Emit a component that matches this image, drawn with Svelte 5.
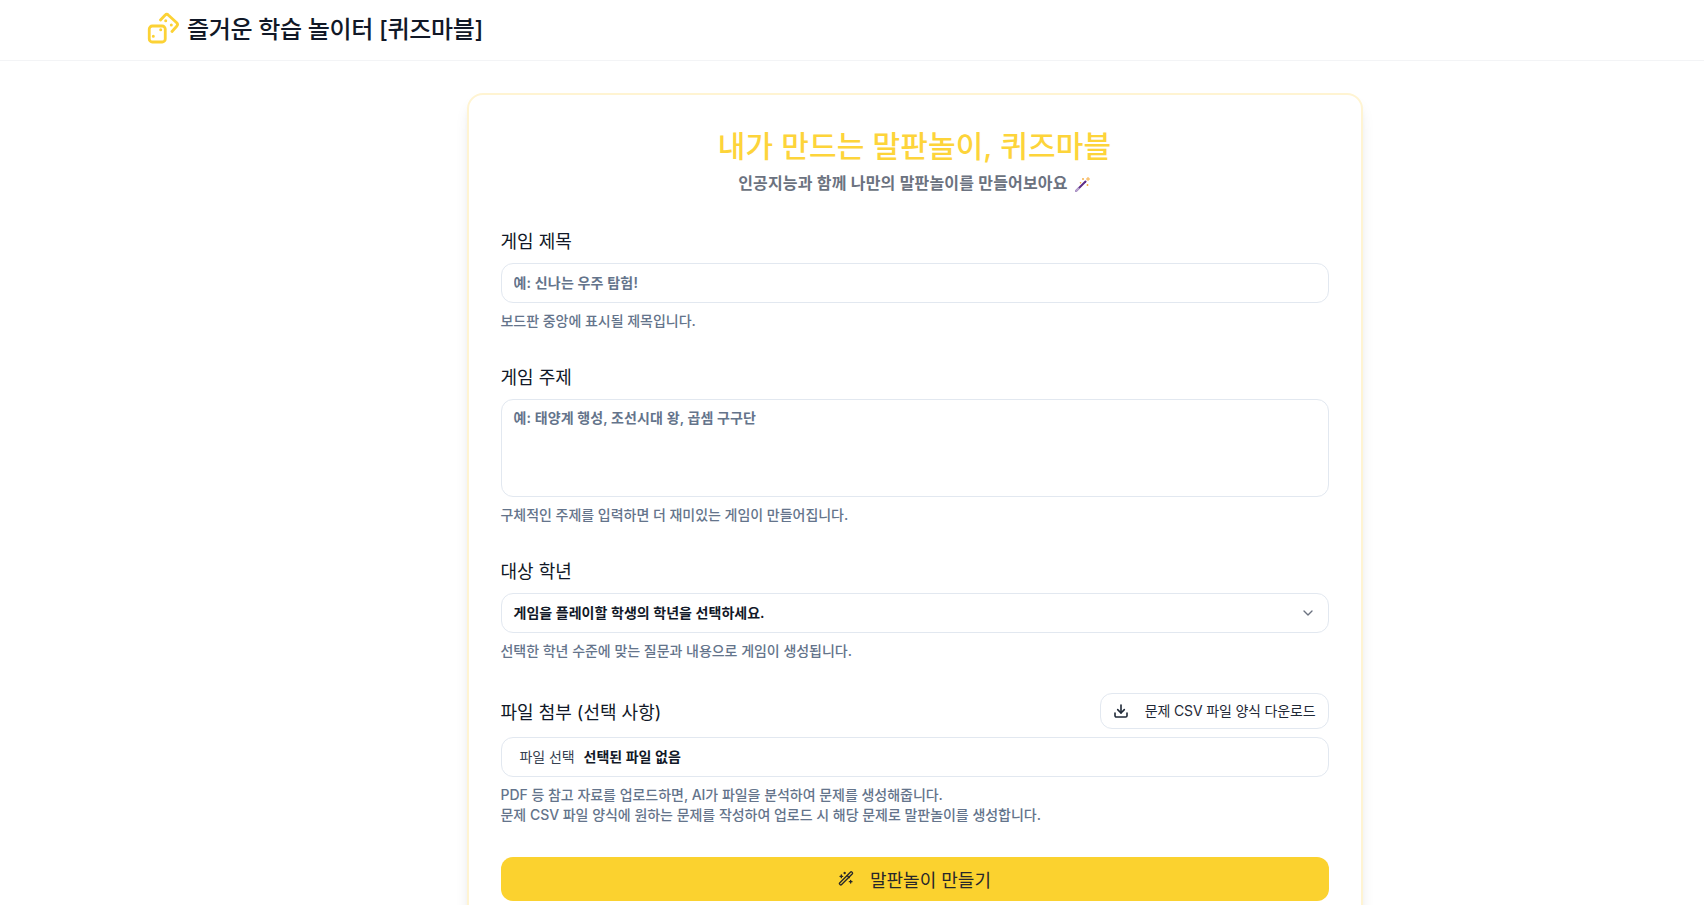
<script>
    const hints = {
        title: '보드판 중앙에 표시될 제목입니다.',
        topic: '구체적인 주제를 입력하면 더 재미있는 게임이 만들어집니다.',
        grade: '선택한 학년 수준에 맞는 질문과 내용으로 게임이 생성됩니다.'
    };
</script>

<header class="topbar">
    <div class="brand">
        <svg class="logo" viewBox="0 0 33 33" fill="none" stroke="#fcd235" stroke-width="2.8" stroke-linecap="round" stroke-linejoin="round">
            <rect x="2.25" y="14" width="16" height="16" rx="3" />
            <path d="M13.5 8 18 3.2a2.5 2.5 0 0 1 3.5 0l8.2 7.6a2.5 2.5 0 0 1 0 3.5L25 19.5" />
            <path d="M6.3 24.3h.01M13.7 17.7h.01M18.7 8.7h.01M24.3 13h.01" stroke-width="3" />
        </svg>
        <span class="brand-name">즐거운 학습 놀이터 [퀴즈마블]</span>
    </div>
</header>

<main class="page">
    <section class="card">
        <h1>내가 만드는 말판놀이, 퀴즈마블</h1>
        <p class="sub">
            인공지능과 함께 나만의 말판놀이를 만들어보아요
            <svg class="wand" viewBox="0 0 16 16">
                <path d="M1 15 10.5 5.5" stroke="#5b2a86" stroke-width="2" stroke-linecap="round" />
                <path d="M1 15 3.5 12.5" stroke="#b9a5d0" stroke-width="2" stroke-linecap="round" />
                <path d="M13 1v4M11 3h4M8 2v2M7 3h2M5.5 6v1.5M4.8 6.7h1.5M12.5 8v2M11.5 9h2" stroke="#f6b04a" stroke-width="1" />
            </svg>
        </p>

        <div class="field">
            <label for="title">게임 제목</label>
            <input id="title" type="text" placeholder="예: 신나는 우주 탐험!" />
            <p class="hint">{hints.title}</p>
        </div>

        <div class="field">
            <label for="topic">게임 주제</label>
            <textarea id="topic" placeholder="예: 태양계 행성, 조선시대 왕, 곱셈 구구단"></textarea>
            <p class="hint">{hints.topic}</p>
        </div>

        <div class="field">
            <label for="grade">대상 학년</label>
            <div class="select" id="grade">
                <span>게임을 플레이할 학생의 학년을 선택하세요.</span>
                <svg viewBox="0 0 24 24" fill="none" stroke="#6b7280" stroke-width="2" stroke-linecap="round" stroke-linejoin="round">
                    <path d="m6 9 6 6 6-6" />
                </svg>
            </div>
            <p class="hint">{hints.grade}</p>
        </div>

        <div class="field">
            <div class="label-row">
                <label for="file">파일 첨부 (선택 사항)</label>
                <button class="download" type="button">
                    <svg viewBox="0 0 24 24" fill="none" stroke="#1f2937" stroke-width="2.4" stroke-linecap="round" stroke-linejoin="round">
                        <path d="M21 15v4a2 2 0 0 1-2 2H5a2 2 0 0 1-2-2v-4" />
                        <path d="m7 10 5 5 5-5" />
                        <path d="M12 15V3" />
                    </svg>
                    <span>문제 CSV 파일 양식 다운로드</span>
                </button>
            </div>
            <div class="file" id="file">
                <span class="file-btn">파일 선택</span>
                <span class="file-name">선택된 파일 없음</span>
            </div>
            <p class="hint">
                PDF 등 참고 자료를 업로드하면, AI가 파일을 분석하여 문제를 생성해줍니다.<br />
                문제 CSV 파일 양식에 원하는 문제를 작성하여 업로드 시 해당 문제로 말판놀이를 생성합니다.
            </p>
        </div>

        <button class="submit" type="button">
            <svg viewBox="0 0 24 24" fill="none" stroke="#27272a" stroke-width="2" stroke-linecap="round" stroke-linejoin="round">
                <path d="m21.6 2.4-1-1a1.2 1.2 0 0 0-1.7 0L2.4 18a1.2 1.2 0 0 0 0 1.7l1 1a1.2 1.2 0 0 0 1.7 0L21.6 4a1.2 1.2 0 0 0 0-1.6Z" />
                <path d="m14 7 3 3" />
                <path d="M5 6v4M19 14v4M10 2v2M7 8H3M21 16h-4M11 3H9" />
            </svg>
            <span>말판놀이 만들기</span>
        </button>
    </section>
</main>

<style>
    :global(body) {
        background: #fff;
        font-family: Inter, "Noto Sans CJK KR", sans-serif;
        color: #111827;
    }
    .topbar {
        box-sizing: content-box;
        height: 54px;
        padding: 0 0 6px 147px;
        border-bottom: 1px solid #f3f4f6;
        display: flex;
        align-items: center;
    }
    .brand {
        display: flex;
        align-items: center;
        gap: 7px;
    }
    .logo {
        width: 33px;
        height: 33px;
        margin-top: 2px;
    }
    .brand-name {
        font-size: 24px;
        font-weight: 500;
        letter-spacing: -0.34px;
        color: #111827;
    }
    .page {
        display: flex;
        justify-content: center;
        padding: 32px 0 32px 125px;
    }
    .card {
        box-sizing: border-box;
        width: 896px;
        padding: 32px;
        background: #fff;
        border: 2px solid #fff4d2;
        border-radius: 16px;
        box-shadow: 0 10px 15px -3px rgba(0,0,0,0.1), 0 4px 6px -4px rgba(0,0,0,0.1);
    }
    h1 {
        margin: 1px 0 0;
        text-align: center;
        font-size: 30px;
        line-height: 36px;
        font-weight: 500;
        letter-spacing: 0.1px;
        color: #fdd43a;
    }
    .sub {
        margin: 7px 0 0;
        text-align: center;
        font-size: 16px;
        line-height: 24px;
        font-weight: 600;
        letter-spacing: 0.17px;
        color: #6b7280;
    }
    .wand {
        width: 16px;
        height: 16px;
        margin-left: 3px;
        vertical-align: -3px;
    }
    .field {
        margin-top: 32px;
    }
    label {
        display: block;
        font-size: 18px;
        line-height: 28px;
        color: #111827;
        margin-bottom: 8px;
        position: relative;
        top: 1px;
    }
    input, textarea, .select, .file {
        box-sizing: border-box;
        display: block;
        width: 100%;
        background: #fff;
        border: 1px solid #e2e8f0;
        border-radius: 12px;
        font-family: inherit;
        font-size: 14px;
        font-weight: 600;
        outline: none;
    }
    input {
        height: 40px;
        padding: 0 12px 2px;
        letter-spacing: 0.15px;
    }
    textarea {
        height: 98px;
        padding: 8px 12px;
        line-height: 20px;
        letter-spacing: 0.1px;
        resize: none;
    }
    input::placeholder, textarea::placeholder {
        color: #64748b;
        opacity: 1;
    }
    .select {
        height: 40px;
        padding: 0 12px 3px;
        display: flex;
        align-items: center;
        justify-content: space-between;
        color: #111827;
    }
    .select span {
        font-weight: 600;
        letter-spacing: 0.03px;
    }
    .select svg {
        width: 16px;
        height: 16px;
        margin-top: 3px;
    }
    .hint {
        margin: 8px 0 0;
        font-size: 14px;
        line-height: 20px;
        font-weight: 500;
        letter-spacing: -0.03px;
        color: #64748b;
    }
    .label-row {
        display: flex;
        align-items: center;
        justify-content: space-between;
        margin-bottom: 8px;
    }
    .label-row label {
        margin: 0;
        top: 2px;
    }
    .download {
        height: 36px;
        padding: 0 12px 2px 12px;
        display: flex;
        align-items: center;
        gap: 16px;
        background: #fff;
        border: 1px solid #e2e8f0;
        border-radius: 12px;
        font-family: inherit;
        font-size: 14px;
        letter-spacing: -0.16px;
        color: #1f2937;
    }
    .download svg {
        width: 16px;
        height: 16px;
        margin-top: 2px;
    }
    .file {
        height: 40px;
        padding: 0 12px 3px;
        display: flex;
        align-items: center;
        gap: 9px;
    }
    .file-btn {
        padding-left: 6px;
        font-weight: 400;
        letter-spacing: -0.08px;
        color: #374151;
    }
    .file-name {
        font-weight: 600;
        color: #111827;
    }
    .submit {
        width: 100%;
        height: 44px;
        margin-top: 32px;
        display: flex;
        align-items: center;
        justify-content: center;
        gap: 16px;
        background: #fbd22f;
        border: none;
        border-radius: 12px;
        font-family: inherit;
        font-size: 18px;
        font-weight: 400;
        color: #27272a;
    }
    .submit svg {
        width: 16px;
        height: 16px;
    }
</style>
